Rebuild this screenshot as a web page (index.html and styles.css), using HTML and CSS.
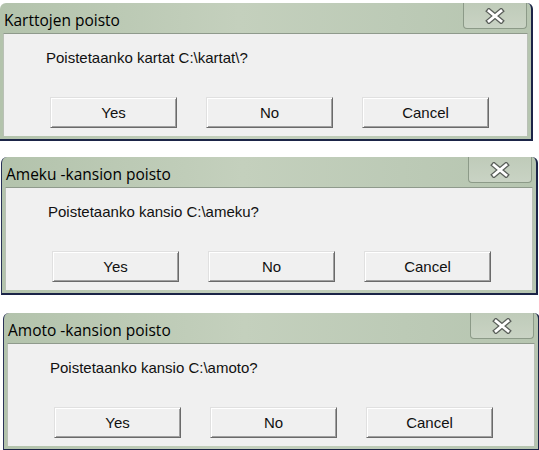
FILE: index.html
```html
<!DOCTYPE html>
<html>
<head>
<meta charset="utf-8">
<link rel="stylesheet" href="styles.css">
</head>
<body>
<div class="page">
  <div class="dialog d1">
    <div class="titlebar">
      <span class="title">Karttojen poisto</span>
      <div class="close"><svg width="22" height="16" viewBox="0 0 22 16"><path d="M5 3 L17 13 M17 3 L5 13" stroke="#5a5f5a" stroke-width="5.4" stroke-linecap="square"/><path d="M5 3 L17 13 M17 3 L5 13" stroke="#ffffff" stroke-width="2.8" stroke-linecap="square"/></svg></div>
    </div>
    <div class="body">
      <div class="msg">Poistetaanko kartat C:\kartat\?</div>
      <div class="buttons">
        <div class="btn">Yes</div>
        <div class="btn">No</div>
        <div class="btn">Cancel</div>
      </div>
    </div>
  </div>
  <div class="dialog d2">
    <div class="titlebar">
      <span class="title">Ameku -kansion poisto</span>
      <div class="close"><svg width="22" height="16" viewBox="0 0 22 16"><path d="M5 3 L17 13 M17 3 L5 13" stroke="#5a5f5a" stroke-width="5.4" stroke-linecap="square"/><path d="M5 3 L17 13 M17 3 L5 13" stroke="#ffffff" stroke-width="2.8" stroke-linecap="square"/></svg></div>
    </div>
    <div class="body">
      <div class="msg">Poistetaanko kansio C:\ameku?</div>
      <div class="buttons">
        <div class="btn">Yes</div>
        <div class="btn">No</div>
        <div class="btn">Cancel</div>
      </div>
    </div>
  </div>
  <div class="dialog d3">
    <div class="titlebar">
      <span class="title">Amoto -kansion poisto</span>
      <div class="close"><svg width="22" height="16" viewBox="0 0 22 16"><path d="M5 3 L17 13 M17 3 L5 13" stroke="#5a5f5a" stroke-width="5.4" stroke-linecap="square"/><path d="M5 3 L17 13 M17 3 L5 13" stroke="#ffffff" stroke-width="2.8" stroke-linecap="square"/></svg></div>
    </div>
    <div class="body">
      <div class="msg">Poistetaanko kansio C:\amoto?</div>
      <div class="buttons">
        <div class="btn">Yes</div>
        <div class="btn">No</div>
        <div class="btn">Cancel</div>
      </div>
    </div>
  </div>
</div>
</body>
</html>
```

FILE: styles.css
```css
html, body {
  margin: 0;
  padding: 0;
  background: #ffffff;
  overflow: hidden;
}
.page {
  display: flex;
  flex-direction: column;
  gap: 16px;
  padding-top: 3px;
  width: 539px;
  height: 450px;
}
.dialog {
  box-sizing: border-box;
  background: linear-gradient(90deg, #b3c3ac 0%, #c4d0bd 45%, #bccab6 75%, #b6c5b0 100%);
  border-right: 2px solid #1b2447;
  border-bottom: 2px solid #1b2447;
  border-radius: 6px 6px 0 0;
  padding: 0 3px 3px 3px;
  flex: none;
}
.d1 { margin-left: 0; width: 533px; }
.d2 { margin-left: 1px; width: 537px; border-left: 1px solid #2a3358; }
.d3 { margin-left: 3px; width: 537px; border-left: 1px solid #2a3358; margin-top: 2px; }
.titlebar {
  height: 30px;
  display: flex;
  align-items: center;
  justify-content: space-between;
}
.title {
  font-family: "Open Sans", "DejaVu Sans", sans-serif;
  font-size: 15.5px;
  color: #000;
  margin-left: 1px;
  margin-top: 3px;
}
.close {
  align-self: flex-start;
  width: 64px;
  height: 26px;
  box-sizing: border-box;
  border: 1px solid #8c9a88;
  border-top: none;
  border-radius: 0 0 4px 4px;
  background: linear-gradient(180deg, #bfcbb9, #c9d3c4);
  display: flex;
  align-items: center;
  justify-content: center;
  margin-right: 1px;
}
.body {
  background: #f0f0f0;
  border-top: 1px solid #8f9a8c;
  border-left: 1px solid #b9c0b6;
  border-right: 1px solid #b9c0b6;
  height: 103px;
  box-sizing: border-box;
  font-family: "Liberation Sans", Arial, sans-serif;
  font-size: 15px;
  color: #111;
}
.msg {
  padding-left: 42px;
  padding-top: 15px;
  height: 17px;
  line-height: 17px;
}
.buttons {
  display: flex;
  gap: 29px;
  padding-left: 46px;
  margin-top: 31px;
}
.btn {
  width: 127px;
  height: 31px;
  box-sizing: border-box;
  border: 1px solid;
  border-color: #e0e0e0 #6a6a6a #6a6a6a #e0e0e0;
  box-shadow: inset 1px 1px #ffffff, inset -1px -1px #a0a0a0;
  background: #f0f0f0;
  display: flex;
  align-items: center;
  justify-content: center;
  font-size: 15px;
}
```
